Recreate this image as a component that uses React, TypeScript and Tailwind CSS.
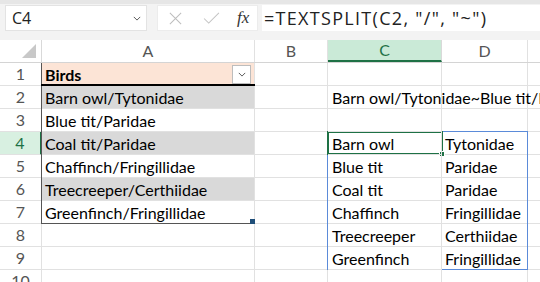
import React from "react";

const COLS = [
  { key: "A", w: "w-[213px]" },
  { key: "B", w: "w-[73px]" },
  { key: "C", w: "w-[114px]" },
  { key: "D", w: "w-[86px]" },
  { key: "E", w: "w-[40px]" },
];

type Row = { n: number; a?: string; c?: string; d?: string; band?: boolean };

const ROWS: Row[] = [
  { n: 1, a: "Birds" },
  { n: 2, a: "Barn owl/Tytonidae", c: "Barn owl/Tytonidae~Blue tit/Paridae~Coal tit/Paridae", band: true },
  { n: 3, a: "Blue tit/Paridae" },
  { n: 4, a: "Coal tit/Paridae", c: "Barn owl", d: "Tytonidae", band: true },
  { n: 5, a: "Chaffinch/Fringillidae", c: "Blue tit", d: "Paridae" },
  { n: 6, a: "Treecreeper/Certhiidae", c: "Coal tit", d: "Paridae", band: true },
  { n: 7, a: "Greenfinch/Fringillidae", c: "Chaffinch", d: "Fringillidae" },
  { n: 8, c: "Treecreeper", d: "Certhiidae" },
  { n: 9, c: "Greenfinch", d: "Fringillidae" },
  { n: 10 },
];

function Chevron({ className }: { className?: string }) {
  return (
    <svg viewBox="0 0 10 6" className={className} fill="none" stroke="currentColor" strokeWidth="1.2">
      <path d="M1 1l4 4 4-4" />
    </svg>
  );
}

export default function App() {
  return (
    <div className="relative w-[540px] h-[282px] overflow-hidden bg-white font-['Lato',sans-serif] text-[16px] text-black">
      {/* Formula bar */}
      <div className="flex h-[40px] items-start border-t-[4px] border-[#e6e6e6] bg-[#f3f3f3] pt-[1px] pl-[5px]">
        <div className="flex h-[26px] w-[142px] shrink-0 items-center justify-between border border-[#e3e3e3] bg-white pl-[6px] pr-[5px] font-['Open_Sans',sans-serif] text-[16px] text-[#222]">
          <span>C4</span>
          <Chevron className="h-[5px] w-[8px] text-[#555]" />
        </div>
        <div className="ml-[10px] flex h-[26px] w-[101px] shrink-0 items-center border border-[#ececec] bg-white pl-[10px]">
          <svg viewBox="0 0 16 16" className="h-[15px] w-[15px] text-[#bdbdbd]" fill="none" stroke="currentColor" strokeWidth="1.1">
            <path d="M2 2l12 12M14 2L2 14" />
          </svg>
          <svg viewBox="0 0 18 14" className="ml-[20px] h-[13px] w-[17px] text-[#c4c4c4]" fill="none" stroke="currentColor" strokeWidth="1.1">
            <path d="M1 7l5 5L17 1" />
          </svg>
          <span className="ml-[17px] font-['Liberation_Serif',serif] text-[17px] italic text-[#333]">fx</span>
        </div>
        <div className="ml-[4px] flex h-[26px] flex-1 items-center whitespace-nowrap bg-white pl-[2px] font-['Open_Sans',sans-serif] text-[18px] tracking-[1.3px] text-[#222]">
          =TEXTSPLIT(C2, "/", "~")
        </div>
      </div>

      {/* Column headers */}
      <div className="flex h-[23px] border-b border-[#d4d4d4] text-[16px] text-[#555]">
        <div className="relative w-[42px] shrink-0 border-r border-[#d9d9d9]">
          <svg viewBox="0 0 14 14" className="absolute right-[5px] bottom-[4px] h-[14px] w-[14px]">
            <polygon points="14,0 14,14 0,14" fill="#c8c8c8" />
          </svg>
        </div>
        {COLS.map((c) =>
          c.key === "C" ? (
            <div
              key={c.key}
              className={`${c.w} flex shrink-0 items-center justify-center border-r border-b-[2px] border-r-[#d9d9d9] border-b-[#1e7145] bg-[#caead7] text-[#1e7145]`}
            >
              {c.key}
            </div>
          ) : (
            <div key={c.key} className={`${c.w} flex shrink-0 items-center justify-center border-r border-[#e1e1e1]`}>
              {c.key === "E" ? "" : c.key}
            </div>
          )
        )}
      </div>

      {/* Rows */}
      {ROWS.map((r) => (
        <div key={r.n} className="flex h-[23px]">
          <div
            className={
              r.n === 4
                ? "flex w-[42px] shrink-0 items-center justify-center border-r-[2px] border-b border-r-[#1e7145] border-b-[#e1e1e1] bg-[#d8f0e1] text-[16px] text-[#1e7145]"
                : "flex w-[42px] shrink-0 items-center justify-center border-r border-b border-[#e1e1e1] text-[16px] text-[#555]"
            }
          >
            {r.n}
          </div>
          <div
            className={
              r.n === 1
                ? "relative flex w-[213px] shrink-0 items-center border-r border-b border-[#e1e1e1] bg-[#fce4d6] pl-[3px] pt-[1px] font-bold"
                : r.band
                ? "flex w-[213px] shrink-0 items-center border-r border-b border-[#e1e1e1] bg-[#d9d9d9] pl-[3px] pt-[1px]"
                : "flex w-[213px] shrink-0 items-center border-r border-b border-[#e1e1e1] pl-[3px] pt-[1px]"
            }
          >
            {r.a}
            {r.n === 1 && (
              <div className="absolute right-[3px] top-[2px] flex h-[19px] w-[19px] items-center justify-center border border-[#bdbdbd] bg-white">
                <Chevron className="h-[5px] w-[8px] text-[#555]" />
              </div>
            )}
          </div>
          <div className="w-[73px] shrink-0 border-r border-b border-[#e1e1e1]" />
          <div className="relative z-10 flex w-[114px] shrink-0 items-center overflow-visible whitespace-nowrap border-r border-b border-[#e1e1e1] pl-[4px] pt-[1px]">
            {r.c}
          </div>
          <div className="flex w-[86px] shrink-0 items-center border-r border-b border-[#e1e1e1] pl-[3px] pt-[1px]">{r.d}</div>
          <div className="w-[40px] shrink-0 border-b border-[#e1e1e1]" />
        </div>
      ))}

      {/* Table outline A1:A7 */}
      <div className="pointer-events-none absolute left-[41px] top-[63px] h-[161px] w-[214px] border-l border-b border-[#555]" />
      <div className="pointer-events-none absolute left-[41px] top-[84px] h-[2px] w-[214px] bg-black" />
      <div className="pointer-events-none absolute left-[250px] top-[219px] h-[5px] w-[5px] bg-[#1f4e79]" />

      {/* Spill range C4:D9 */}
      <div className="pointer-events-none absolute left-[327px] top-[131px] h-[139px] w-[201px] border border-[#5b8bd9]" />

      {/* Active cell C4 */}
      <div className="pointer-events-none absolute left-[327px] top-[131px] h-[24px] w-[116px] border-[2px] border-[#1e7145]" />
      <div className="pointer-events-none absolute left-[439px] top-[151px] h-[6px] w-[6px] border border-white bg-[#1e7145]" />
    </div>
  );
}
